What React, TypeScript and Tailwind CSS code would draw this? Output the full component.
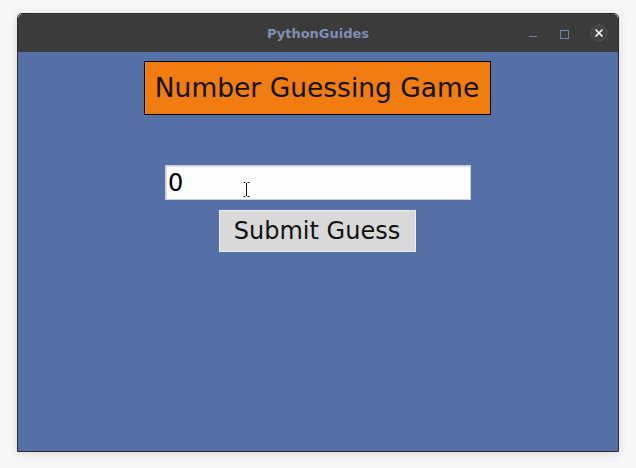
import { useState } from 'react';

const FONT = { fontFamily: '"DejaVu Sans", Verdana, sans-serif' };

function TitleBar() {
  return (
    <div className="relative flex h-[38px] shrink-0 items-center justify-center rounded-t-[5px] bg-[#3b3b3b]">
      <span className="pt-[2px] text-[13px] font-bold text-[#7f90b4]" style={FONT}>
        PythonGuides
      </span>
      <div className="absolute right-[10px] top-[10px] flex items-center gap-[21px]">
        <svg width="10" height="16" viewBox="0 0 10 16" aria-hidden>
          <line x1="1" y1="11.5" x2="9" y2="11.5" stroke="#6f83ae" strokeWidth="1" />
        </svg>
        <svg width="10" height="16" viewBox="0 0 10 16" aria-hidden>
          <rect x="1.5" y="5.5" width="8" height="8" fill="none" stroke="#6f83ae" strokeWidth="1" />
        </svg>
        <svg width="18" height="18" viewBox="0 0 18 18" aria-hidden>
          <circle cx="9" cy="9" r="8" fill="#424242" stroke="#8a7560" strokeWidth="1" strokeDasharray="1 1.5" />
          <line x1="5.5" y1="5.5" x2="12.5" y2="12.5" stroke="#ffffff" strokeWidth="1.6" />
          <line x1="12.5" y1="5.5" x2="5.5" y2="12.5" stroke="#ffffff" strokeWidth="1.6" />
        </svg>
      </div>
    </div>
  );
}

function IBeam() {
  return (
    <svg
      className="pointer-events-none absolute left-[77px] top-[16px]"
      width="7"
      height="15"
      viewBox="0 0 7 15"
      aria-hidden
    >
      <path d="M0.5 0.5h2M4.5 0.5h2M3.5 1v13M0.5 14.5h2M4.5 14.5h2" stroke="#111111" strokeWidth="1" fill="none" />
    </svg>
  );
}

export default function App() {
  const [guess, setGuess] = useState('0');

  return (
    <div className="h-[468px] w-[636px] overflow-hidden bg-[#f7f7f7] pl-[17px] pt-[13px]" style={FONT}>
      <div className="flex h-[439px] w-[602px] flex-col rounded-t-[5px] border border-[#2b2b2b] shadow-[0_2px_10px_rgba(0,0,0,0.12)]">
        <TitleBar />
        <div className="flex flex-1 flex-col items-center bg-[#5470a6] pt-[9px]">
          <div className="mr-[2px] flex h-[54px] w-[347px] items-center justify-center border border-black bg-[#f07c12] text-[26.5px] text-[#111111]">
            Number Guessing Game
          </div>
          <div className="relative mt-[50px] h-[35px] w-[306px] border border-[#c6d0e2] bg-[#fdfdfd] shadow-[inset_1px_1px_0_#d8dde6]">
            <input
              value={guess}
              onChange={(e) => setGuess(e.target.value)}
              className="h-full w-full bg-transparent pl-[2px] text-[24px] leading-none text-black outline-none"
              style={FONT}
            />
            <IBeam />
          </div>
          <button
            type="button"
            className="mr-[2px] mt-[10px] h-[42px] w-[197px] border border-[#e9edf5] bg-[#d9d9d9] text-[24px] text-[#111111]"
            style={FONT}
          >
            Submit Guess
          </button>
        </div>
      </div>
    </div>
  );
}
